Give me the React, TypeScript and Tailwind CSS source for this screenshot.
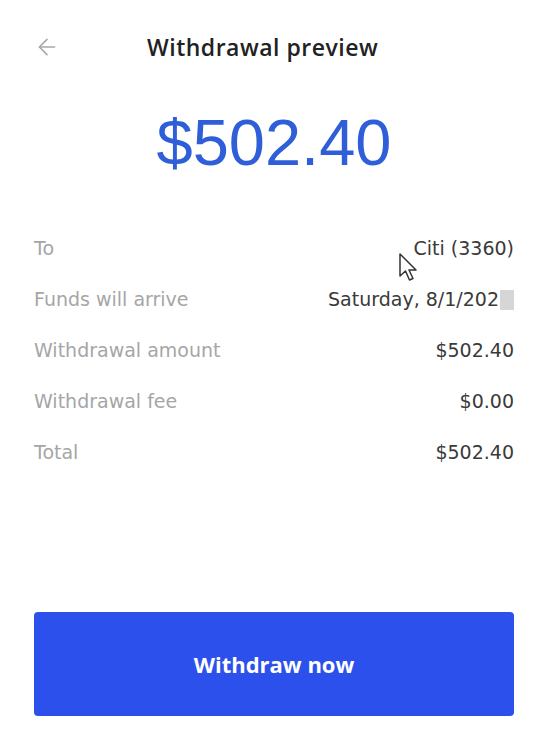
import { ArrowLeft } from "lucide-react";

const rows = [
  { label: "To", value: "Citi (3360)" },
  { label: "Funds will arrive", value: "Saturday, 8/1/202", redacted: true },
  { label: "Withdrawal amount", value: "$502.40" },
  { label: "Withdrawal fee", value: "$0.00" },
  { label: "Total", value: "$502.40" },
];

function Cursor() {
  return (
    <svg
      className="absolute left-[398px] top-[252px]"
      width="22"
      height="32"
      viewBox="0 0 22 32"
    >
      <path
        d="M2 2 L2 24 L7.5 19 L11.5 28 L15 26.5 L11 18 L18 18 Z"
        fill="#ffffff"
        stroke="#333333"
        strokeWidth="1.5"
        strokeLinejoin="round"
      />
    </svg>
  );
}

export default function App() {
  return (
    <div
      className="relative w-[548px] h-[736px] bg-white px-[34px] overflow-hidden"
      style={{ fontFamily: '"DejaVu Sans", "Liberation Sans", sans-serif' }}
    >
      <header className="pt-[32px] h-[62px] flex items-center">
        <ArrowLeft className="w-[26px] h-[26px] text-[#a8a8a8]" strokeWidth={1.5} />
        <h1
          className="ml-[87px] text-[23px] font-semibold tracking-[0.5px] text-[#222222]"
          style={{ fontFamily: '"Open Sans", "Liberation Sans", sans-serif' }}
        >
          Withdrawal preview
        </h1>
      </header>

      <div
        className="mt-[49px] h-[64px] leading-[64px] text-center text-[65px] text-[#2f5fd8]"
        style={{ fontFamily: '"Liberation Sans", Arial, sans-serif' }}
      >
        $502.40
      </div>

      <div className="mt-[48px]">
        {rows.map((r) => (
          <div key={r.label} className="h-[51px] flex items-center justify-between text-[19px]">
            <span className="text-[#a6a6a6]">{r.label}</span>
            <span className="flex items-center text-[#3a3a3a]">
              {r.value}
              {r.redacted && <span className="ml-[1px] w-[14px] h-[20px] bg-[#d6d6d6]" />}
            </span>
          </div>
        ))}
      </div>

      <button
        type="button"
        className="mt-[134px] w-full h-[104px] rounded-[4px] bg-[#2b50ec] text-white text-[22px] font-bold"
        style={{ fontFamily: '"Open Sans", "Liberation Sans", sans-serif' }}
      >
        Withdraw now
      </button>

      <Cursor />
    </div>
  );
}
